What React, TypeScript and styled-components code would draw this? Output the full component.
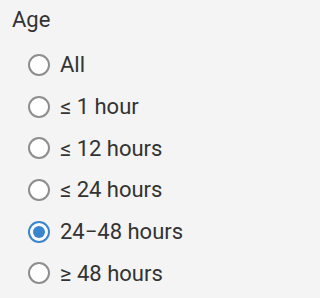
import styled, { createGlobalStyle } from "styled-components";

const GlobalStyle = createGlobalStyle`
  html, body {
    margin: 0;
    padding: 0;
    background: #f4f4f4;
  }
  body {
    font-family: Roboto, "Liberation Sans", sans-serif;
    color: #333333;
  }
`;

const Panel = styled.fieldset`
  margin: 0;
  padding: 8px 0 0 12px;
  border: none;
  min-height: 298px;
  box-sizing: border-box;
`;

const Legend = styled.div`
  font-size: 22px;
  line-height: 24px;
  margin: 0 0 12px;
`;

const List = styled.div`
  display: flex;
  flex-direction: column;
  padding-left: 16px;
`;

const Option = styled.label`
  display: flex;
  align-items: center;
  height: 41.7px;
  font-size: 22px;
  cursor: pointer;
`;

const Dot = styled.span<{ $checked: boolean }>`
  box-sizing: border-box;
  width: 22px;
  height: 22px;
  flex: none;
  border-radius: 50%;
  background: #ffffff;
  border: 2px solid ${(p) => (p.$checked ? "#3a85d0" : "#8e8e8e")};
  display: flex;
  align-items: center;
  justify-content: center;

  &::after {
    content: "";
    display: ${(p) => (p.$checked ? "block" : "none")};
    width: 12px;
    height: 12px;
    border-radius: 50%;
    background: #3a85d0;
  }
`;

const Label = styled.span`
  margin-left: 10px;
  white-space: nowrap;
`;

const options = ["All", "≤ 1 hour", "≤ 12 hours", "≤ 24 hours", "24−48 hours", "≥ 48 hours"];

export default function App() {
  const selected = "24−48 hours";
  return (
    <>
      <GlobalStyle />
      <Panel>
        <Legend>Age</Legend>
        <List>
          {options.map((o) => (
            <Option key={o}>
              <Dot $checked={o === selected} />
              <Label>{o}</Label>
            </Option>
          ))}
        </List>
      </Panel>
    </>
  );
}
